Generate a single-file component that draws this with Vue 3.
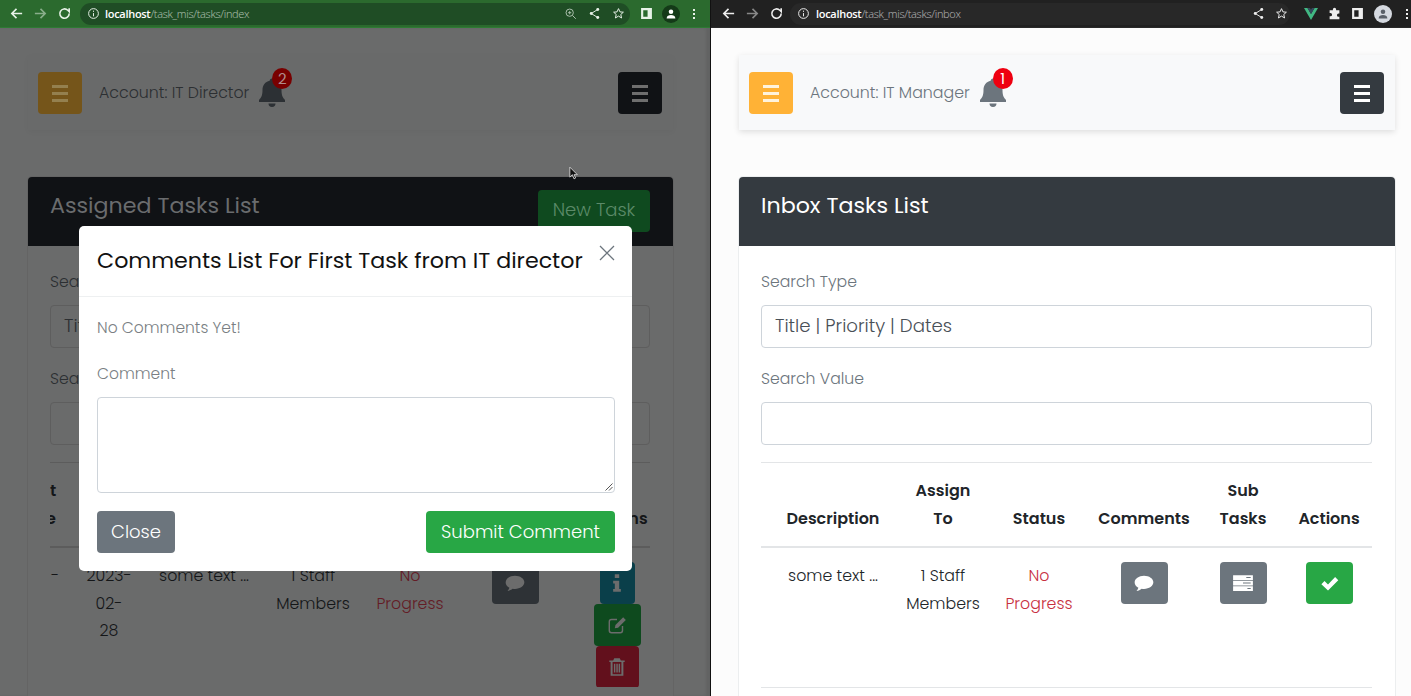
<script setup>
const leftHead = ['Description', 'Assign<br>To', 'Status', 'Comments', 'Actions']
const rightHead = ['Description', 'Assign<br>To', 'Status', 'Comments', 'Sub<br>Tasks', 'Actions']
</script>

<template>
  <div class="desktop">
    <section class="window win-left">
      <header class="chrome chrome-left">
        <div class="nav-icons">
          <svg class="ic" viewBox="0 0 16 16"><path d="M14 8H3M8 3 3 8l5 5" /></svg>
          <svg class="ic faint" viewBox="0 0 16 16"><path d="M2 8h11M8 3l5 5-5 5" /></svg>
          <svg class="ic" viewBox="0 0 16 16"><path d="M13 8a5 5 0 1 1-1.500-3.500L13 6V2.500" /></svg>
        </div>
        <div class="url url-left">
          <svg class="ic-sm" viewBox="0 0 16 16"><circle cx="8" cy="8" r="6" /><path d="M8 7.500v4M8 4.500v1.500" /></svg>
          <span><b>localhost</b><i>/task_mis/tasks/index</i></span>
          <span class="spacer"></span>
          <svg class="ic-sm dimicon" viewBox="0 0 16 16"><circle cx="7" cy="7" r="4.500" /><path d="m10.500 10.500 4 4M5 7h4M7 5v4" /></svg>
          <svg class="ic-sm" viewBox="0 0 16 16"><path d="M12 3 4 8l8 5" /><circle class="fill" cx="12" cy="3" r="1.800" /><circle class="fill" cx="4" cy="8" r="1.800" /><circle class="fill" cx="12" cy="13" r="1.800" /></svg>
          <svg class="ic-sm" viewBox="0 0 16 16"><path d="m8 2 1.800 4 4.200.4-3.200 2.800 1 4.300L8 11.200l-3.800 2.300 1-4.300L2 6.400 6.200 6z" /></svg>
        </div>
        <div class="end-icons">
          <svg class="panel" viewBox="0 0 12 12"><path fill-rule="evenodd" d="M1 1h10v10H1zM3 3v6h4V3z" /></svg>
          <span class="avatar avatar-left"><svg viewBox="0 0 16 16"><circle cx="8" cy="5.500" r="2.600" /><path d="M3 13c0-3 2.500-4 5-4s5 1 5 4z" /></svg></span>
          <span class="dots"><i></i><i></i><i></i></span>
        </div>
      </header>

      <div class="page">
        <nav class="navbar">
          <button class="nav-btn yellow"><span class="bars"><i></i><i></i><i></i></span></button>
          <span class="account">Account: IT Director</span>
          <span class="bell-wrap">
            <svg class="bell" viewBox="0 0 28 30"><path d="M14 1.500c-1.400 0-2.300 1-2.300 2.300-4.500 1-7.200 4.500-7.200 9.200 0 5.500-1.300 7.500-3.500 10v2h26v-2c-2.200-2.500-3.500-4.500-3.500-10 0-4.700-2.700-8.200-7.200-9.200 0-1.300-.9-2.300-2.300-2.300zM10.500 26.500a3.500 3.500 0 0 0 7 0z" /></svg>
            <span class="badge">2</span>
          </span>
          <span class="spacer"></span>
          <button class="nav-btn dark"><span class="bars"><i></i><i></i><i></i></span></button>
        </nav>

        <div class="card">
          <div class="card-head">
            <h2>Assigned Tasks List</h2>
            <button class="btn new-task">New Task</button>
          </div>
          <div class="card-body">
            <label>Search Type</label>
            <div class="input">Title | Priority | Dates</div>
            <label>Search Value</label>
            <div class="input"></div>
            <hr />
            <div class="table">
              <div class="grid head grid-left">
                <div class="cut"><span>t</span><br /><span class="cut-e">e</span></div>
                <div></div>
                <div v-for="h in leftHead" :key="h" v-html="h"></div>
              </div>
              <div class="grid row grid-left">
                <div class="dash">-</div>
                <div>2023-<br />02-<br />28</div>
                <div>some text ...</div>
                <div>1 Staff<br />Members</div>
                <div class="red">No<br />Progress</div>
                <div>
                  <button class="act act-gray">
                    <svg viewBox="0 0 20 20"><path d="M10 3.500c-4.700 0-8.500 2.700-8.500 6 0 2 1.300 3.700 3.400 4.800-.3 1.200-1 2.200-1.700 3 1.800-.3 3.400-1.100 4.700-2.100.7.100 1.400.2 2.100.2 4.700 0 8.500-2.700 8.500-6s-3.800-5.900-8.500-5.900z" /></svg>
                  </button>
                </div>
                <div class="stack">
                  <button class="act act-info">
                    <svg viewBox="0 0 20 20"><path d="M8 2h4v3.500H8zM6.500 8H12v7.500h1.500V18h-7v-2.500H8V10.500H6.500z" /></svg>
                  </button>
                  <button class="act act-edit">
                    <svg class="line" viewBox="0 0 20 20"><path d="M15 11v4a2 2 0 0 1-2 2H5a2 2 0 0 1-2-2V7a2 2 0 0 1 2-2h5" /><path class="solid" d="M8 13l.6-3 7-7 2.400 2.400-7 7z" /></svg>
                  </button>
                  <button class="act act-del">
                    <svg viewBox="0 0 20 20"><path fill-rule="evenodd" d="M7.500 2h5l1 2H17v1.500h-1.200V18H4.200V5.500H3V4h3.500zM6 5.500V16.500h8V5.500zM7.200 7h1.300v8H7.200zM9.400 7h1.300v8H9.400zM11.500 7h1.300v8h-1.300z" /></svg>
                  </button>
                </div>
              </div>
            </div>
          </div>
        </div>
      </div>

      <div class="backdrop">
        <svg class="cursor" viewBox="0 0 12 16"><path d="M1 1v12l3-3 2 5 2-1-2-4h4z" /></svg>
        <div class="modal">
          <div class="modal-head">
            <h3>Comments List For First Task from IT director</h3>
            <svg class="close-x" viewBox="0 0 16 16"><path d="M1 1l14 14M15 1 1 15" /></svg>
          </div>
          <div class="modal-body">
            <p>No Comments Yet!</p>
            <label>Comment</label>
            <div class="textarea">
              <svg class="grip" viewBox="0 0 8 8"><path d="M7.500.5l-7 7M7.500 4l-3.500 3.500" /></svg>
            </div>
            <div class="modal-foot">
              <button class="btn btn-gray">Close</button>
              <button class="btn btn-green">Submit Comment</button>
            </div>
          </div>
        </div>
      </div>
    </section>

    <section class="window win-right">
      <header class="chrome chrome-right">
        <div class="nav-icons">
          <svg class="ic" viewBox="0 0 16 16"><path d="M14 8H3M8 3 3 8l5 5" /></svg>
          <svg class="ic faint" viewBox="0 0 16 16"><path d="M2 8h11M8 3l5 5-5 5" /></svg>
          <svg class="ic" viewBox="0 0 16 16"><path d="M13 8a5 5 0 1 1-1.500-3.500L13 6V2.500" /></svg>
        </div>
        <div class="url url-right">
          <svg class="ic-sm" viewBox="0 0 16 16"><circle cx="8" cy="8" r="6" /><path d="M8 7.500v4M8 4.500v1.500" /></svg>
          <span><b>localhost</b><i>/task_mis/tasks/inbox</i></span>
          <span class="spacer"></span>
          <svg class="ic-sm" viewBox="0 0 16 16"><path d="M12 3 4 8l8 5" /><circle class="fill" cx="12" cy="3" r="1.800" /><circle class="fill" cx="4" cy="8" r="1.800" /><circle class="fill" cx="12" cy="13" r="1.800" /></svg>
          <svg class="ic-sm" viewBox="0 0 16 16"><path d="m8 2 1.800 4 4.200.4-3.200 2.800 1 4.300L8 11.200l-3.800 2.300 1-4.300L2 6.400 6.200 6z" /></svg>
        </div>
        <div class="end-icons end-right">
          <svg class="vue" viewBox="0 0 14 12"><path d="M0 0h3.500L7 6l3.500-6H14L7 12z" fill="#41b883" /><path d="M3.500 0H6l1 1.800L8 0h2.500L7 6z" fill="#35495e" /></svg>
          <svg class="puzzle" viewBox="0 0 16 16"><path d="M6 3a2 2 0 0 1 4 0v1h4v4h-1a2 2 0 0 0 0 4h1v3H2v-3.500h1a2 2 0 0 0 0-4H2V4h4z" /></svg>
          <svg class="panel" viewBox="0 0 12 12"><path fill-rule="evenodd" d="M1 1h10v10H1zM3 3v6h4V3z" /></svg>
          <span class="avatar avatar-right"><svg viewBox="0 0 16 16"><circle cx="8" cy="5.500" r="2.600" /><path d="M3 13c0-3 2.500-4 5-4s5 1 5 4z" /></svg></span>
          <span class="dots"><i></i><i></i><i></i></span>
        </div>
      </header>

      <div class="page">
        <nav class="navbar">
          <button class="nav-btn yellow"><span class="bars"><i></i><i></i><i></i></span></button>
          <span class="account">Account: IT Manager</span>
          <span class="bell-wrap">
            <svg class="bell" viewBox="0 0 28 30"><path d="M14 1.500c-1.400 0-2.300 1-2.300 2.300-4.500 1-7.200 4.500-7.200 9.200 0 5.500-1.300 7.500-3.500 10v2h26v-2c-2.200-2.500-3.500-4.500-3.500-10 0-4.700-2.700-8.200-7.200-9.200 0-1.300-.9-2.300-2.300-2.300zM10.500 26.500a3.500 3.500 0 0 0 7 0z" /></svg>
            <span class="badge">1</span>
          </span>
          <span class="spacer"></span>
          <button class="nav-btn dark"><span class="bars"><i></i><i></i><i></i></span></button>
        </nav>

        <div class="card">
          <div class="card-head"><h2>Inbox Tasks List</h2></div>
          <div class="card-body">
            <label>Search Type</label>
            <div class="input">Title | Priority | Dates</div>
            <label>Search Value</label>
            <div class="input"></div>
            <hr />
            <div class="table">
              <div class="grid head grid-right">
                <div v-for="h in rightHead" :key="h" v-html="h"></div>
              </div>
              <div class="grid row grid-right">
                <div>some text ...</div>
                <div>1 Staff<br />Members</div>
                <div class="red">No<br />Progress</div>
                <div>
                  <button class="act act-gray">
                    <svg viewBox="0 0 20 20"><path d="M10 3.500c-4.700 0-8.500 2.700-8.500 6 0 2 1.300 3.700 3.400 4.800-.3 1.200-1 2.200-1.700 3 1.800-.3 3.400-1.100 4.700-2.100.7.100 1.400.2 2.100.2 4.700 0 8.500-2.700 8.500-6s-3.800-5.900-8.500-5.900z" /></svg>
                  </button>
                </div>
                <div>
                  <button class="act act-gray">
                    <svg viewBox="0 0 20 20"><path fill-rule="evenodd" d="M1 3h18v4.200H1zM13 4.600v.8h4v-.8zM1 8h18v4.200H1zM10 9.600v.8h7v-.8zM1 13h18v4.200H1zM14 14.600v.8h3v-.8z" /></svg>
                  </button>
                </div>
                <div>
                  <button class="act act-ok">
                    <svg viewBox="0 0 20 20"><path d="M3.500 10.500 6 8l2.800 2.800L14.500 4.800 17 7.300 8.800 15.500z" /></svg>
                  </button>
                </div>
              </div>
            </div>
            <hr />
          </div>
        </div>
      </div>
    </section>
  </div>
</template>

<style>
html, body { margin: 0; overflow: hidden; }
</style>

<style scoped>
.desktop {
  display: flex;
  width: 1411px;
  height: 696px;
  overflow: hidden;
  background: #111;
  font-family: Poppins, Inter, "Liberation Sans", sans-serif;
  font-size: 15.8px;
  font-weight: 300;
  line-height: 27.5px;
  color: #212529;
}
.window { position: relative; height: 696px; overflow: hidden; display: flex; flex-direction: column; }
.win-left {
  width: 710px;
  margin-right: 1px;
  --page: #6a6b6b;
  --nav-bg: #696a6a;
  --nav-shadow: rgba(0, 0, 0, .03);
  --yellow: #75551a;
  --bars-y: #94804f;
  --dark: #101215;
  --bars: #6e6e6e;
  --muted: #2c2f32;
  --bell: #2c3034;
  --badge: #780000;
  --badge-fg: #b08c8c;
  --card: #6a6b6b;
  --card-border: #646464;
  --head: #101215;
  --head-fg: #6a6c6e;
  --field: #6a6b6b;
  --field-border: #5e5e5e;
  --field-fg: #2c2f32;
  --text: #141618;
  --rule: #5c5c5c;
  --red: #641c26;
  --gray: #2e3236;
  --icon-fg: #6c6c6c;
  --info: #0a3f4a;
  --edit: #0e4a1e;
  --del: #62101c;
  --new: #0f4a1f;
  --new-fg: #5c8a69;
}
.win-right {
  width: 700px;
  --page: #fcfcfc;
  --nav-bg: #f8f9fa;
  --nav-shadow: rgba(0, 0, 0, .12);
  --yellow: #ffb236;
  --bars-y: #fff3dc;
  --dark: #343a40;
  --bars: #ffffff;
  --muted: #6c757d;
  --bell: #6c757d;
  --badge: #ee0010;
  --badge-fg: #fff;
  --card: #ffffff;
  --card-border: #eceeef;
  --head: #343a40;
  --head-fg: #ffffff;
  --field: #ffffff;
  --field-border: #ced4da;
  --field-fg: #495057;
  --text: #212529;
  --rule: #e3e5e7;
  --red: #c8303f;
  --gray: #6c757d;
  --icon-fg: #ffffff;
}

/* browser chrome */
.chrome { height: 27px; flex: none; display: flex; align-items: center; border-bottom: 1px solid transparent; }
.chrome-left { background: #2b6a2e; border-bottom-color: #2e7a33; color: #e8f2e8; padding-left: 9px; }
.chrome-right { background: #212121; border-bottom-color: #2a2a2a; color: #eee; padding-left: 10px; }
.nav-icons { display: flex; gap: 9px; flex: none; }
.chrome-left .nav-icons { width: 71px; }
.chrome-right .nav-icons { width: 69px; }
.ic { width: 15px; height: 15px; fill: none; stroke: currentColor; stroke-width: 1.7; }
.faint { opacity: .5; }
.ic-sm { width: 13px; height: 13px; fill: none; stroke: currentColor; stroke-width: 1.2; flex: none; }
.fill { fill: currentColor; stroke: none; }
.dimicon { opacity: .7; }
.url {
  display: flex;
  align-items: center;
  height: 22px;
  border-radius: 11px;
  box-sizing: border-box;
  gap: 5px;
  font-family: "Open Sans", sans-serif;
  font-size: 11px;
  letter-spacing: -.3px;
}
.url b { font-weight: 600; color: #fff; }
.url i { font-style: normal; opacity: .7; }
.url-left { background: #1f4d25; width: 550px; padding: 0 5px 0 7px; }
.url-right { background: #282828; width: 500px; padding: 0 2px 0 7px; gap: 6px; }
.url .spacer { flex: 1; }
.url .ic-sm + .ic-sm { margin-left: 6px; }
.url-right .ic-sm + .ic-sm { margin-left: 4px; }
.end-icons { display: flex; align-items: center; gap: 9px; padding-left: 10px; }
.end-right { gap: 10px; padding-left: 14px; }
.panel { width: 13px; height: 13px; fill: currentColor; }
.vue { width: 14px; height: 12px; }
.puzzle { width: 13px; height: 13px; fill: currentColor; }
.avatar { width: 18px; height: 18px; border-radius: 50%; display: flex; align-items: center; justify-content: center; }
.avatar svg { width: 14px; height: 14px; }
.avatar-left { background: #143a18; }
.avatar-left svg { fill: #fff; }
.avatar-right { background: #d5d9e0; }
.avatar-right svg { fill: #5a6068; }
.dots { display: flex; flex-direction: column; gap: 2px; margin-left: 4px; }
.dots i { width: 2px; height: 2px; background: currentColor; }

/* page */
.page { flex: 1; background: var(--page); padding: 27px 16px 0 28px; min-height: 0; }
.win-left .page { padding-right: 37px; box-shadow: inset -4px 0 3px rgba(0, 0, 0, .08); }
.navbar {
  height: 75px;
  display: flex;
  align-items: center;
  padding: 0 11px 0 10px;
  background: var(--nav-bg);
  box-shadow: 0 2px 6px var(--nav-shadow);
}
.spacer { flex: 1; }
.nav-btn {
  width: 44px;
  height: 42px;
  border: 0;
  border-radius: 4px;
  padding: 0;
  display: flex;
  align-items: center;
  justify-content: center;
  margin-top: 1px;
}
.yellow { background: var(--yellow); }
.dark { background: var(--dark); }
.bars { display: flex; flex-direction: column; gap: 4px; }
.bars i { display: block; width: 16px; height: 3px; background: var(--bars); }
.yellow .bars i { background: var(--bars-y); }
.account { margin-left: 17px; font-size: 15.8px; color: var(--muted); }
.bell-wrap { position: relative; margin-left: 9px; display: flex; top: -1px; }
.bell { width: 28px; height: 30px; fill: var(--bell); }
.badge {
  position: absolute;
  left: 14px;
  top: -9px;
  width: 20px;
  height: 21px;
  border-radius: 50%;
  background: var(--badge);
  color: var(--badge-fg);
  font-size: 15px;
  font-weight: 400;
  line-height: 21px;
  text-align: center;
}

.card {
  margin-top: 47px;
  height: 560px;
  background: var(--card);
  border-radius: 4px 4px 0 0;
  box-shadow: 0 0 0 1px var(--card-border);
}
.card-head {
  height: 69px;
  box-sizing: border-box;
  padding: 13px 23px 0 22px;
  display: flex;
  justify-content: space-between;
  align-items: flex-start;
  background: var(--head);
  border-radius: 4px 4px 0 0;
  color: var(--head-fg);
}
h2 { margin: 0; font-size: 22.2px; line-height: 31px; font-weight: 400; }
.card-body { padding: 22px 23px 0 22px; }
label { display: block; color: var(--muted); line-height: 27.5px; font-size: 15.7px; }
.input {
  box-sizing: border-box;
  height: 43px;
  margin: 9.5px 0 17px;
  padding: 0 13px;
  border: 1px solid var(--field-border);
  border-radius: 4px;
  background: var(--field);
  color: var(--field-fg);
  font-size: 18.2px;
  line-height: 40px;
}
hr { border: 0; height: 1px; background: var(--rule); margin: 0; }
.table { overflow: hidden; }
.grid { display: grid; text-align: center; color: var(--text); }
.grid-left { grid-template-columns: 22px 74px 116px 102px 92px 118px 86px; width: 610px; }
.grid-right { grid-template-columns: 144px 76px 116px 94px 104px 68px 9px; }
.head { height: 85px; box-sizing: border-box; align-items: end; padding-bottom: 14px; font-size: 16px; font-weight: 600; border-bottom: 2px solid var(--rule); }
.row { padding-top: 14px; height: 125px; }
.cut { text-align: left; overflow: hidden; }
.cut-e { display: inline-block; margin-left: -4px; }
.dash { text-align: left; padding-left: 1px; }
.red { color: var(--red); }
.stack { display: flex; flex-direction: column; align-items: center; }
.act {
  width: 47px;
  height: 42px;
  border: 0;
  border-radius: 4px;
  padding: 0;
  display: inline-flex;
  align-items: center;
  justify-content: center;
}
.act svg { width: 22px; height: 22px; fill: var(--icon-fg); }
.act-gray { background: var(--gray); }
.act-ok { background: #28a745; }
.act-ok svg { width: 25px; height: 25px; }
.act-info { background: var(--info); width: 35px; }
.act-edit { background: var(--edit); }
.act-del { background: var(--del); width: 43px; }
.act svg.line { fill: none; stroke: var(--icon-fg); stroke-width: 1.3; }
.line .solid { fill: var(--icon-fg); stroke: none; }

.btn {
  border: 0;
  border-radius: 4px;
  height: 42px;
  padding: 0 15px;
  font: inherit;
  font-size: 18px;
  color: #fff;
}
.btn-green { background: #28a745; }
.btn-gray { background: #6c757d; padding: 0 14px; }
.new-task { background: var(--new); color: var(--new-fg); width: 112px; padding: 0 0 2px; }

/* modal */
.backdrop { position: absolute; inset: 28px 0 0 0; }
.cursor { position: absolute; left: 569px; top: 138px; width: 10px; height: 14px; fill: #111; stroke: #ddd; stroke-width: 1; }
.modal {
  position: absolute;
  left: 79px;
  top: 198px;
  width: 553px;
  height: 345px;
  background: #fff;
  border-radius: 5px;
}
.modal-head {
  height: 71px;
  box-sizing: border-box;
  padding: 17px 17px 0 18px;
  display: flex;
  justify-content: space-between;
  border-bottom: 1px solid #eef0f1;
}
h3 { margin: 0; font-size: 22.2px; line-height: 35px; font-weight: 400; color: #111; white-space: nowrap; }
.close-x { width: 16px; height: 16px; stroke: #6c757d; stroke-width: 1.3; fill: none; margin-top: 2px; flex: none; }
.modal-body { padding: 17px 17px 0 18px; font-size: 15.5px; }
.modal-body p { margin: 0; color: #7a7f84; line-height: 27.5px; }
.modal-body label { margin-top: 18px; color: #7a7f84; font-size: 15.5px; }
.textarea {
  position: relative;
  box-sizing: border-box;
  height: 96px;
  margin-top: 10px;
  border: 1px solid #ced4da;
  border-radius: 4px;
}
.grip { position: absolute; right: 1px; bottom: 1px; width: 8px; height: 8px; stroke: #555; stroke-width: 1; fill: none; }
.modal-foot { display: flex; justify-content: space-between; margin-top: 18px; }
.modal-foot .btn { height: 41.5px; }
</style>
